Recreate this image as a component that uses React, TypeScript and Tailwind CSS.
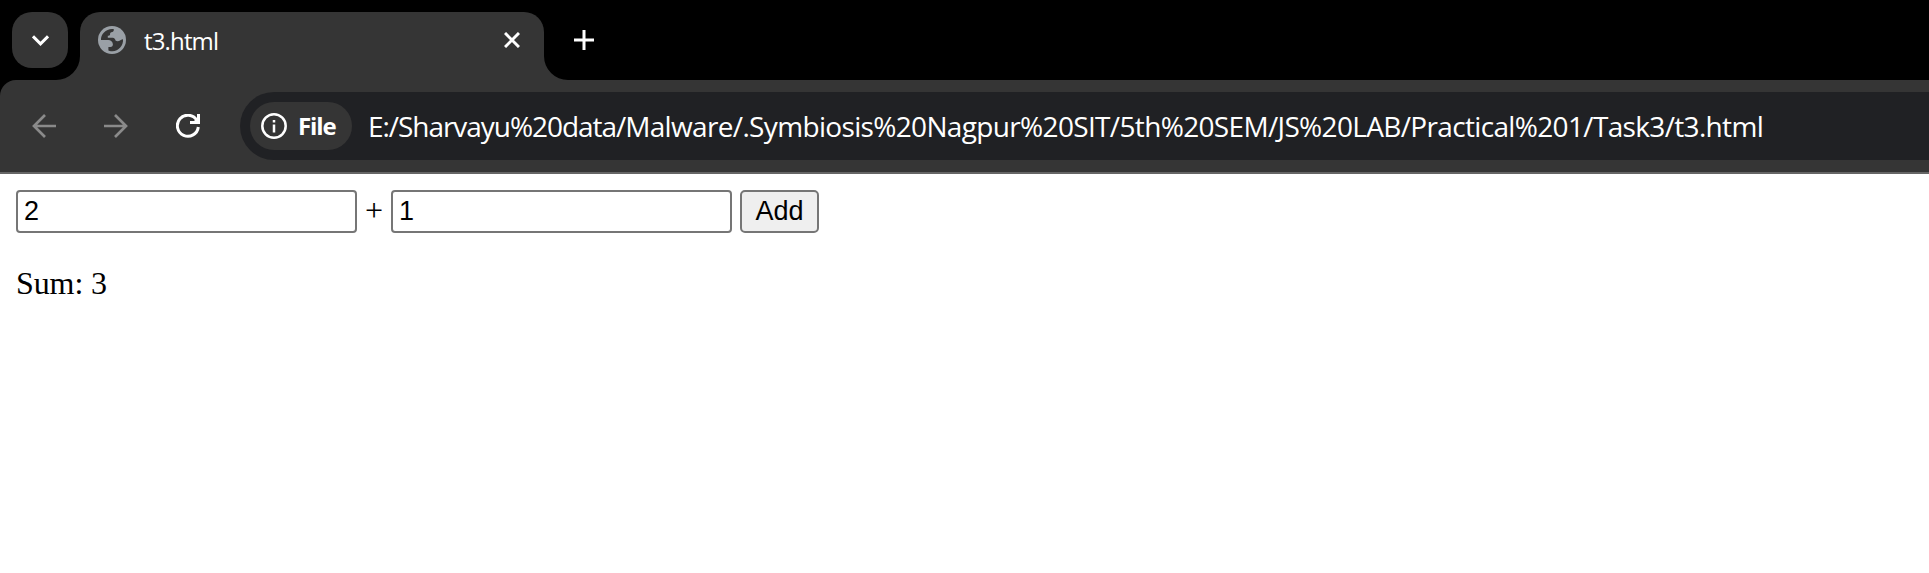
import React, { useState } from "react";

const URL_PARTS = [
  { text: "E:/Sharvayu%20data/", className: "tracking-[-1.05px]" },
  { text: "Malware/.Symbiosis%20Nagpur%20SIT/5th%20SEM/JS%20LAB/Practical%201/Task3/t3.html", className: "tracking-[-0.66px]" },
];

function GlobeIcon() {
  return (
    <svg className="h-7 w-7" viewBox="0 0 28 28">
      <circle cx="14" cy="14" r="14" fill="#9aa0a6" />
      <path
        fill="#353535"
        d="M15.6 3.1C16.2 4.4 15.6 5.6 14.4 5.9C12.6 6.1 11.9 6.8 12.1 8.2C12.1 9.4 11 9.6 9.8 9.8V11.8H14.6C16.6 12 17.2 13 17.5 14.6C19 15.6 21 15.2 22.4 14.2C23.4 13.6 24.4 13.2 25 13.2C25.6 19.6 20.6 25 14.4 25.2C12.8 25.3 11.2 25 10.4 24.5V21H12.3C14.2 20.8 14.9 19.7 14.9 18.2C14.7 15.6 12.8 14.3 10.2 14.1H3C2.6 8 8.5 2.2 15.6 3.1Z"
      />
    </svg>
  );
}

function ArrowIcon({ className = "" }: { className?: string }) {
  return (
    <svg className={"h-6 w-6 " + className} viewBox="0 0 24 24" fill="none" stroke="#8a8a8a" strokeWidth="2.7">
      <path d="M24 12H2M13 1L2 12L13 23" />
    </svg>
  );
}

function ReloadIcon() {
  return (
    <svg className="h-6 w-6" viewBox="0 0 24 24" fill="none" stroke="#fff" strokeWidth="3">
      <path d="M22.3 13A10.5 10.5 0 1 1 20.8 6.2" />
      <path d="M22.5 0V8.5H14" />
      <path d="M21.6 3.6V8H17Z" fill="#fff" stroke="none" />
    </svg>
  );
}

function NumberField({ value, onChange }: { value: string; onChange: (v: string) => void }) {
  return (
    <input
      className="h-[43px] w-[341px] rounded-[4px] border-2 border-[#767676] bg-white px-[6px] py-0 font-['Liberation_Sans',sans-serif] text-[27px] leading-none text-black outline-none"
      value={value}
      onChange={(e) => onChange(e.target.value)}
    />
  );
}

export default function App() {
  const [a, setA] = useState("2");
  const [b, setB] = useState("1");
  const [sum, setSum] = useState(3);
  return (
    <div className="flex h-[573px] w-full flex-col overflow-hidden bg-white font-['Open_Sans',sans-serif]">
      <div className="flex h-20 shrink-0 items-start bg-black pt-3">
        <button className="ml-3 flex h-14 w-14 shrink-0 items-center justify-center rounded-[20px] bg-[#353535]">
          <svg className="h-[11px] w-[17px]" viewBox="0 0 17 11" fill="none" stroke="#fff" strokeWidth="3">
            <path d="M1 1.3L8.5 8.8L16 1.3" />
          </svg>
        </button>
        <div className="-ml-3 flex h-[68px] w-6 shrink-0 items-end">
          <svg className="h-6 w-6" viewBox="0 0 24 24">
            <path d="M24 0A24 24 0 0 1 0 24H24Z" fill="#353535" />
          </svg>
        </div>
        <div className="flex h-[68px] w-[464px] shrink-0 items-start rounded-t-[20px] bg-[#353535] pl-[18px] pr-6">
          <div className="mt-[14px] flex h-7 flex-1 items-center">
            <GlobeIcon />
            <span className="ml-[18px] mt-px flex-1 whitespace-nowrap text-[24px] leading-7 tracking-[-0.85px] text-white">t3.html</span>
            <svg className="h-4 w-4" viewBox="0 0 16 16" fill="none" stroke="#fff" strokeWidth="3">
              <path d="M1 1L15 15M15 1L1 15" />
            </svg>
          </div>
        </div>
        <div className="flex h-[68px] w-6 shrink-0 items-end">
          <svg className="h-6 w-6" viewBox="0 0 24 24">
            <path d="M0 0A24 24 0 0 0 24 24H0Z" fill="#353535" />
          </svg>
        </div>
        <svg className="ml-[6px] mt-[18px] h-5 w-5" viewBox="0 0 20 20" stroke="#fff" strokeWidth="3">
          <path d="M10 0V20M0 10H20" />
        </svg>
      </div>

      <div className="flex h-[94px] shrink-0 bg-black">
        <div className="flex w-full items-start rounded-tl-[16px] border-b-2 border-[#666] bg-[#353535] pt-3">
          <div className="flex h-[68px] w-[240px] shrink-0 items-center gap-12 pl-8">
            <ArrowIcon />
            <ArrowIcon className="rotate-180" />
            <ReloadIcon />
          </div>
          <div className="flex h-[68px] flex-1 items-center rounded-l-full bg-[#202124] pl-[10px]">
            <div className="flex h-12 w-[102px] shrink-0 items-center rounded-full bg-[#353535] pl-[11px]">
              <svg className="h-[26px] w-[26px] shrink-0" viewBox="0 0 26 26" fill="none" stroke="#fff" strokeWidth="2.5">
                <circle cx="13" cy="13" r="11.7" />
                <path d="M13 11.5V19.5M13 7V9.5" />
              </svg>
              <span className="-mt-px ml-[11px] text-[24px] font-bold leading-8 tracking-[-1.1px] text-white">File</span>
            </div>
            <span className="-mt-px ml-4 whitespace-nowrap text-[28px] leading-9 text-white">
              {URL_PARTS.map((part) => (
                <span key={part.text} className={part.className}>{part.text}</span>
              ))}
            </span>
          </div>
        </div>
      </div>

      <div className="flex flex-col px-4 pt-4 font-['Liberation_Serif',serif] text-[32px] text-black">
        <div className="flex h-[43px] items-center gap-2">
          <NumberField value={a} onChange={setA} />
          <span className="-mt-[3px] w-[18px] leading-9">+</span>
          <NumberField value={b} onChange={setB} />
          <button
            className="flex h-[43px] w-[79px] items-center justify-center rounded-[5px] border-2 border-[#767676] bg-[#efefef] font-['Liberation_Sans',sans-serif] text-[27px] leading-none"
            onClick={() => setSum(Number(a) + Number(b))}
          >
            Add
          </button>
        </div>
        <p className="mt-8 leading-9 tracking-[-0.1px]">Sum: {sum}</p>
      </div>
    </div>
  );
}
